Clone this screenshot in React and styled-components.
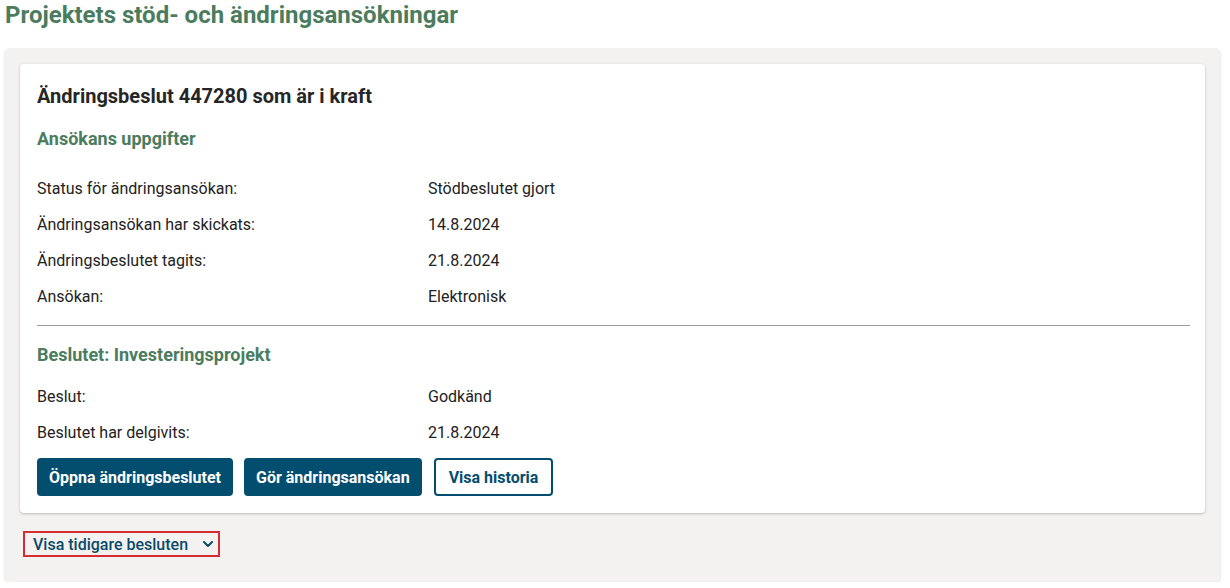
import React from "react";
import styled, { createGlobalStyle } from "styled-components";

const Global = createGlobalStyle`
  html, body { margin: 0; padding: 0; background: #ffffff; }
  body { font-family: Roboto, "Noto Sans", Arial, sans-serif; color: #212121; }
`;

const Page = styled.div`
  padding: 0 9px 0 4px;
`;

const Title = styled.h1`
  margin: 0 0 18px 1px;
  font-size: 24px;
  line-height: 30px;
  font-weight: 700;
  color: #4b7c5e;
`;

const Panel = styled.section`
  background: #f3f2f0;
  border-radius: 6px;
  padding: 16px 16px 25px 16px;
  box-shadow: 0 1px 2px rgba(0, 0, 0, 0.12);
`;

const Card = styled.div`
  background: #ffffff;
  border-radius: 4px;
  box-shadow: 0 1px 3px rgba(0, 0, 0, 0.22);
  padding: 18px 15px 17px 17px;
`;

const CardTitle = styled.h2`
  margin: 0;
  font-size: 20px;
  line-height: 28px;
  font-weight: 700;
  color: #262626;
`;

const SectionTitle = styled.h3`
  margin: ${(p) => p.$top}px 0 0 0;
  font-size: 18px;
  line-height: 24px;
  font-weight: 700;
  color: #4b7c5e;
`;

const Rows = styled.dl`
  margin: ${(p) => p.$top}px 0 0 0;
`;

const Row = styled.div`
  display: grid;
  grid-template-columns: 391px 1fr;
  font-size: 16px;
  line-height: 36px;
  color: #222222;
`;

const Label = styled.dt`
  margin: 0;
`;

const Value = styled.dd`
  margin: 0;
`;

const Divider = styled.hr`
  margin: 10px 0 0 0;
  border: 0;
  height: 1px;
  background: #9a9a9a;
`;

const Actions = styled.div`
  display: flex;
  gap: 11px;
  margin-top: 7px;
`;

const Button = styled.button`
  font-family: Roboto, "Noto Sans", Arial, sans-serif;
  font-size: 16px;
  font-weight: 700;
  height: 38px;
  padding: 0 ${(p) => (p.$outline ? "13px" : "10px")};
  border-radius: 4px;
  cursor: pointer;
  border: 2px solid #034d6e;
  background: ${(p) => (p.$outline ? "#ffffff" : "#034d6e")};
  color: ${(p) => (p.$outline ? "#034d6e" : "#ffffff")};
  margin-left: ${(p) => (p.$outline ? "1px" : "0")};
`;

const Toggle = styled.button`
  margin: 18px 0 0 3px;
  display: inline-flex;
  align-items: center;
  gap: 14px;
  height: 26px;
  padding: 0 4px 0 8px;
  border: 2px solid #d42b35;
  background: transparent;
  font-family: Roboto, "Noto Sans", Arial, sans-serif;
  font-size: 16px;
  font-weight: 500;
  color: #0b4a69;
  cursor: pointer;
`;

const Chevron = () => (
  <svg width="12" height="12" viewBox="0 0 12 12" fill="none" stroke="#0b4a69" strokeWidth="2" strokeLinecap="round" strokeLinejoin="round">
    <path d="M2 4l4 4 4-4" />
  </svg>
);

const info = [
  ["Status för ändringsansökan:", "Stödbeslutet gjort"],
  ["Ändringsansökan har skickats:", "14.8.2024"],
  ["Ändringsbeslutet tagits:", "21.8.2024"],
  ["Ansökan:", "Elektronisk"],
];

const decision = [
  ["Beslut:", "Godkänd"],
  ["Beslutet har delgivits:", "21.8.2024"],
];

export default function App() {
  return (
    <Page>
      <Global />
      <Title>Projektets stöd- och ändringsansökningar</Title>
      <Panel>
        <Card>
          <CardTitle>Ändringsbeslut 447280 som är i kraft</CardTitle>
          <SectionTitle $top={17}>Ansökans uppgifter</SectionTitle>
          <Rows $top={20}>
            {info.map(([l, v]) => (
              <Row key={l}>
                <Label>{l}</Label>
                <Value>{v}</Value>
              </Row>
            ))}
          </Rows>
          <Divider />
          <SectionTitle $top={17}>Beslutet: Investeringsprojekt</SectionTitle>
          <Rows $top={12}>
            {decision.map(([l, v]) => (
              <Row key={l}>
                <Label>{l}</Label>
                <Value>{v}</Value>
              </Row>
            ))}
          </Rows>
          <Actions>
            <Button>Öppna ändringsbeslutet</Button>
            <Button>Gör ändringsansökan</Button>
            <Button $outline>Visa historia</Button>
          </Actions>
        </Card>
        <Toggle>
          Visa tidigare besluten
          <Chevron />
        </Toggle>
      </Panel>
    </Page>
  );
}
